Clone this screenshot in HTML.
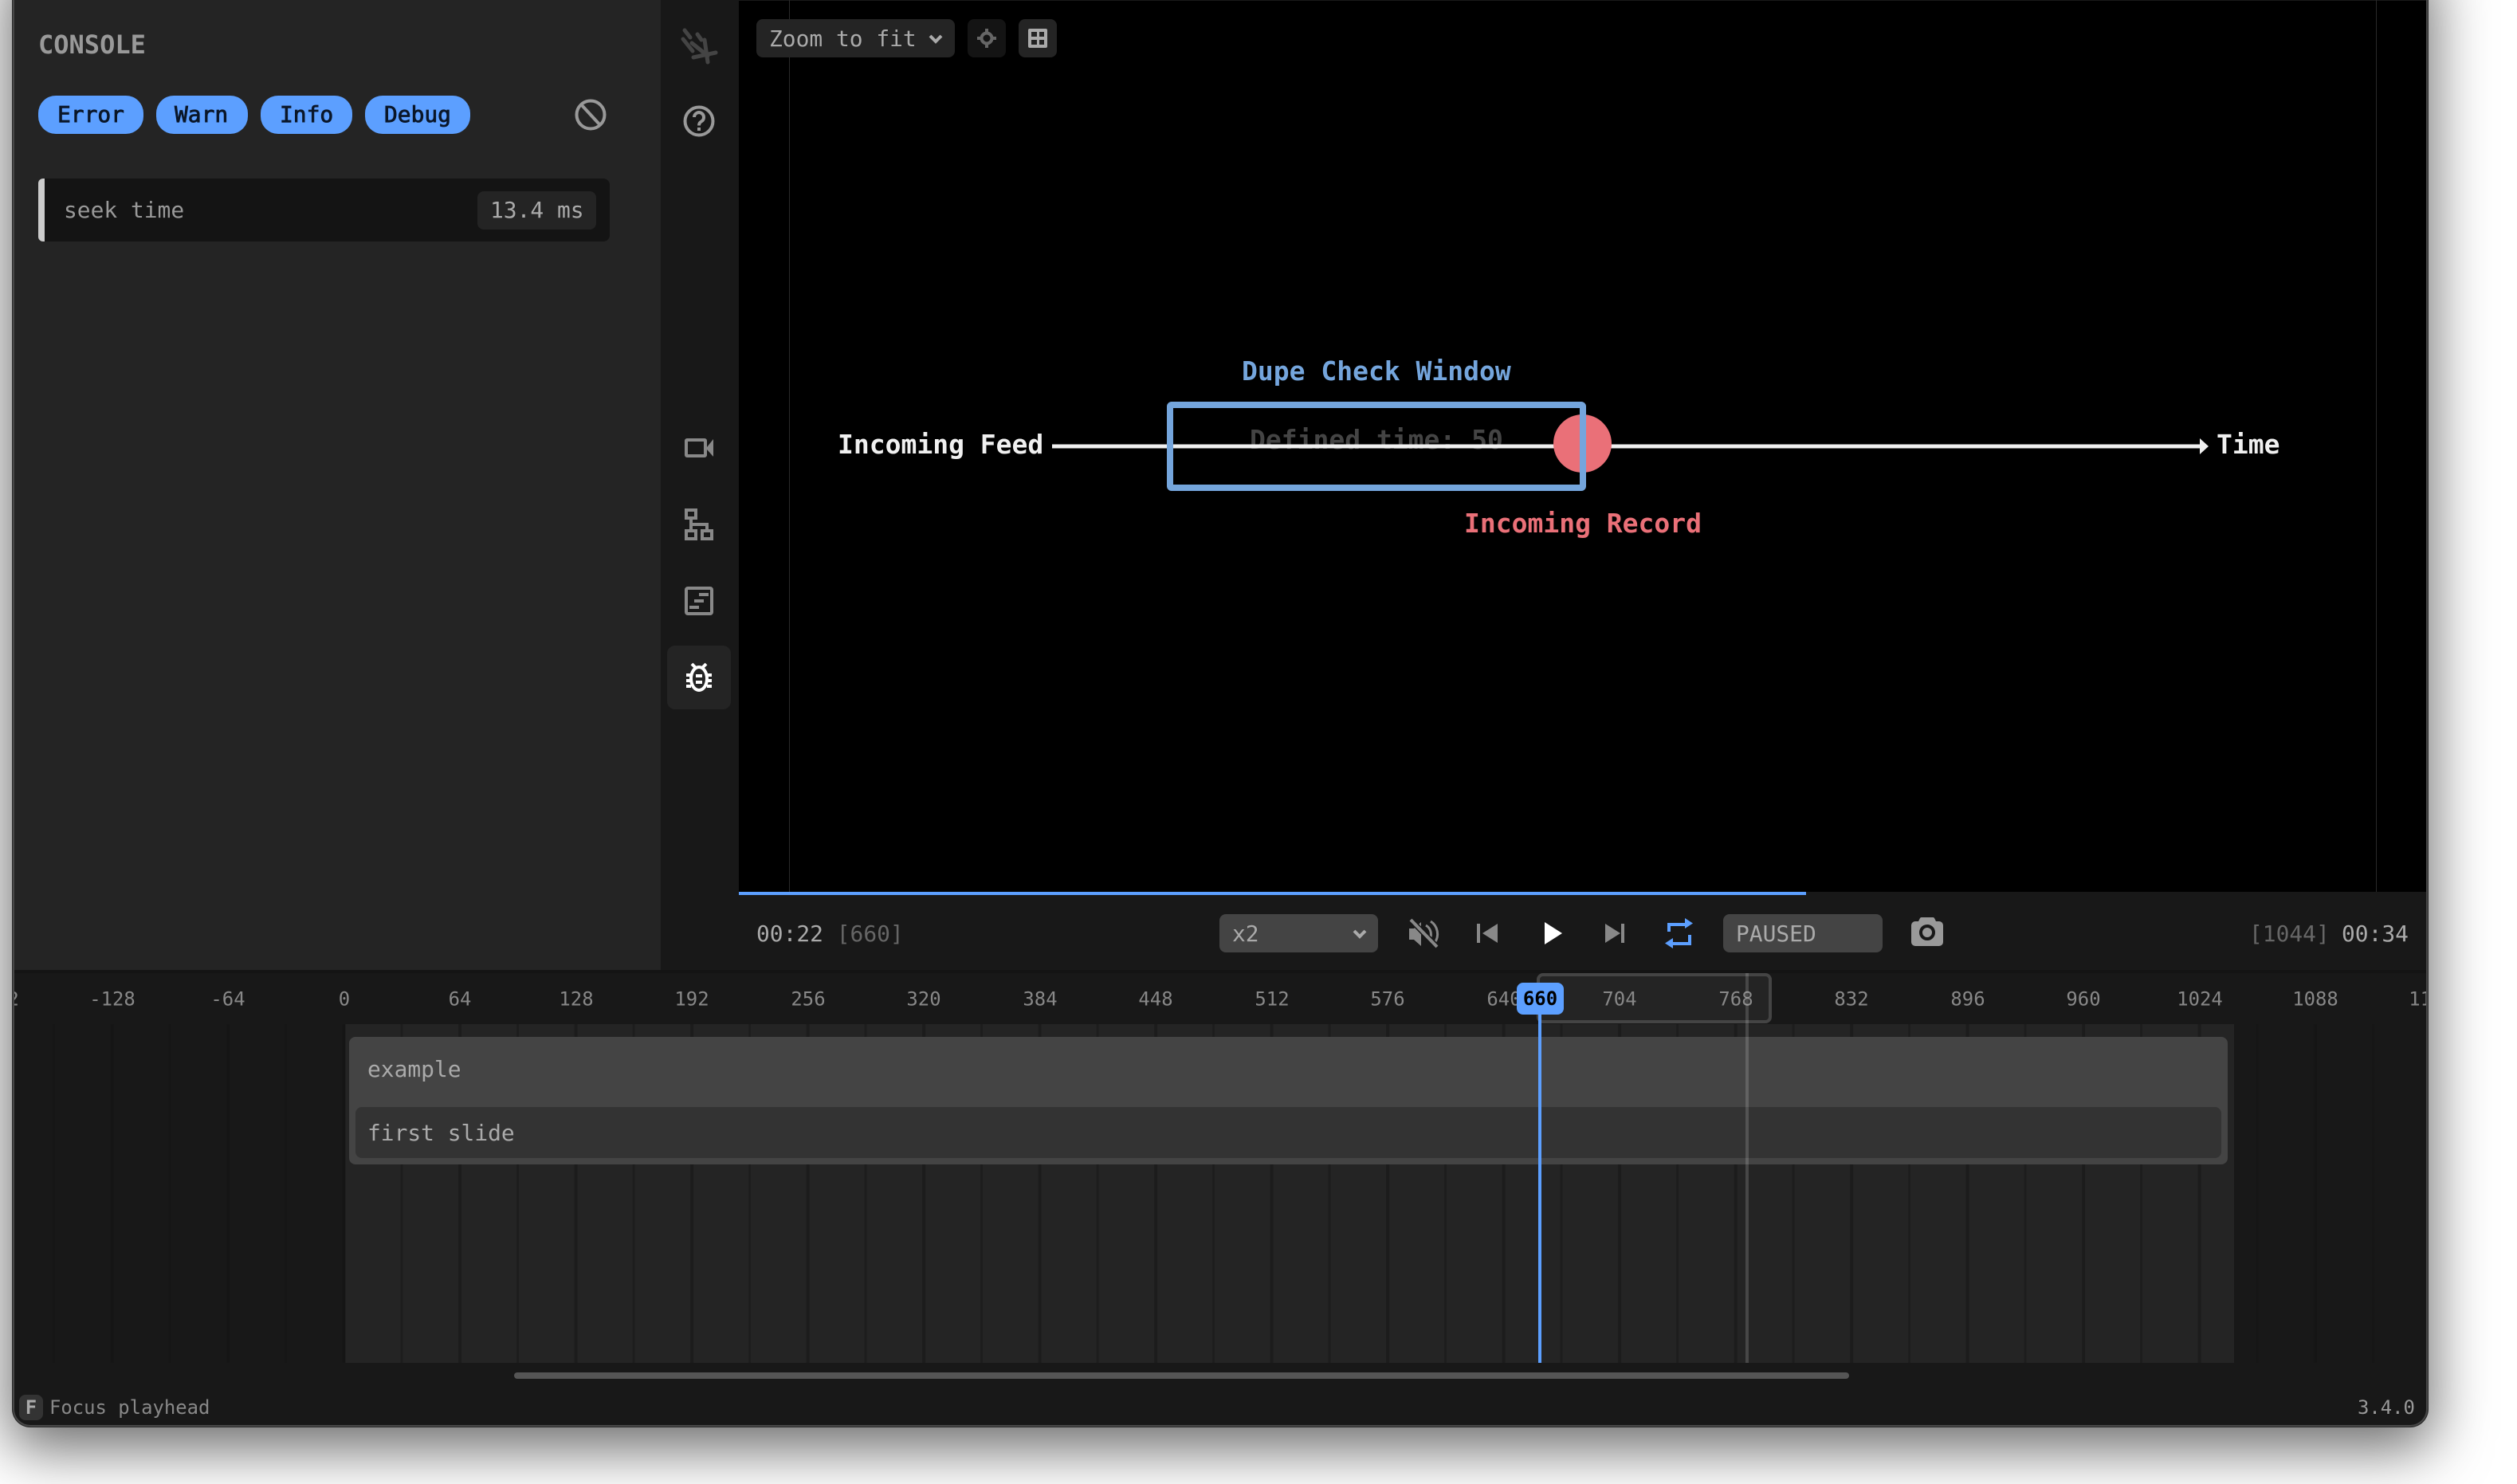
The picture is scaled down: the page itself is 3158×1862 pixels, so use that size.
<!DOCTYPE html>
<html>
<head>
<meta charset="utf-8">
<style>
html,body{margin:0;padding:0;background:#fff;width:3158px;height:1862px;overflow:hidden}
#win{position:absolute;left:16px;top:-60px;width:3030px;height:1850px;border-radius:22px;overflow:hidden;background:#181818;box-shadow:0 0 0 1px #2a2a2a,0 22px 72px 6px rgba(0,0,0,.58)}
#win svg{position:absolute;left:-16px;top:60px;display:block}
text{font-family:"DejaVu Sans Mono","Liberation Mono",monospace;white-space:pre}
.t28{font-size:27.9px}.t24{font-size:23.9px}.t33{font-size:33px;font-weight:bold}
.r text{font-size:23.9px;fill:#888;text-anchor:middle}
</style>
</head>
<body>
<div id="win">
<svg width="3158" height="1862" viewBox="0 0 3158 1862" xmlns="http://www.w3.org/2000/svg">
<defs>
<pattern id="gi" patternUnits="userSpaceOnUse" x="429.6" y="0" width="145.5" height="10"><rect x="0" y="0" width="4" height="10" fill="#1c1c1c"/><rect x="73" y="0" width="3" height="10" fill="#1d1d1d"/></pattern>
<pattern id="go" patternUnits="userSpaceOnUse" x="429.6" y="0" width="145.5" height="10"><rect x="0" y="0" width="4" height="10" fill="#151515"/><rect x="73" y="0" width="3" height="10" fill="#161616"/></pattern>
</defs>

<!-- panels -->
<rect x="0" y="0" width="829" height="1217" fill="#242424"/>
<rect x="829" y="0" width="98" height="1217" fill="#181818"/>
<rect x="927" y="0" width="2131" height="1119" fill="#000"/>
<rect x="927" y="0" width="2131" height="1" fill="#1a1a1a"/>
<rect x="990" y="0" width="1" height="1119" fill="#2a2a2a"/>
<rect x="2981" y="0" width="1" height="1119" fill="#2a2a2a"/>

<!-- console -->
<text x="48" y="67" font-size="32" font-weight="bold" fill="#999">CONSOLE</text>
<rect x="48" y="120" width="132" height="48" rx="22" fill="#5c9fff"/>
<rect x="196" y="120" width="115" height="48" rx="22" fill="#5c9fff"/>
<rect x="327" y="120" width="115" height="48" rx="22" fill="#5c9fff"/>
<rect x="458" y="120" width="132" height="48" rx="22" fill="#5c9fff"/>
<g class="t28" fill="#0a1628" stroke="#0a1628" stroke-width=".8">
<text x="72" y="153">Error</text><text x="219" y="153">Warn</text><text x="351" y="153">Info</text><text x="482" y="153">Debug</text>
</g>
<g fill="none" stroke="#999" stroke-width="4"><circle cx="741" cy="144" r="17.5"/><path d="M729 131L753 157"/></g>

<rect x="48" y="224" width="717" height="79" rx="8" fill="#141414"/>
<path d="M56 224H54a6 6 0 0 0-6 6v67a6 6 0 0 0 6 6h2z" fill="#ccc"/>
<rect x="599" y="240" width="149" height="48" rx="8" fill="#242424"/>
<text class="t28" x="80" y="273" fill="#999">seek time</text>
<text class="t28" x="615" y="273" fill="#aaa">13.4 ms</text>

<!-- rail icons -->
<g fill="none" stroke="#444" stroke-width="5" stroke-linecap="round">
<path d="M859 38L866 47M875 43L880 50M857 49L869 64M868 54L888 70M884 50L888 78M870 72L898 66"/>
</g>
<g fill="none" stroke="#999" stroke-width="4"><circle cx="877" cy="152" r="17.500"/><path d="M871 147a6 6 0 1 1 9.500 5c-2.200 1.400-3.500 2.600-3.500 5.500"/></g>
<rect x="875" y="160" width="4" height="4" fill="#999"/>

<g fill="none" stroke="#888" stroke-width="4">
<rect x="861" y="552" width="24" height="20" rx="1"/>
<rect x="861" y="640" width="12" height="10"/><rect x="861" y="666" width="12" height="10"/><rect x="881" y="666" width="12" height="10"/>
<path d="M867 650V666M867 658H887V666"/>
<rect x="861" y="738" width="32" height="32" rx="2"/>
</g>
<path d="M887 561L895 551V573L887 564Z" fill="#888"/>
<rect x="877" y="744" width="12" height="4" fill="#888"/><rect x="871" y="752" width="12" height="4" fill="#888"/><rect x="865" y="760" width="12" height="4" fill="#888"/>

<rect x="837" y="810" width="80" height="80" rx="10" fill="#242424"/>
<g fill="none" stroke="#fff" stroke-width="4">
<ellipse cx="877" cy="851.500" rx="10" ry="14.500"/>
<path d="M868 833L873 838M886 833L881 838"/>
<path d="M861 847H867M861 854H867M861 861H867M887 847H893M887 854H893M887 861H893"/>
</g>
<rect x="873" y="846" width="8" height="4" fill="#fff"/><rect x="873" y="854" width="8" height="4" fill="#fff"/>

<!-- viewport toolbar -->
<rect x="949" y="24" width="249" height="48" rx="8" fill="#242424"/>
<text class="t28" x="965" y="58" fill="#aaa">Zoom to fit</text>
<path d="M1167 45L1174 52L1181 45" fill="none" stroke="#aaa" stroke-width="4"/>
<rect x="1214" y="24" width="48" height="48" rx="8" fill="#141414"/>
<g fill="none" stroke="#666" stroke-width="4"><circle cx="1238" cy="48" r="6.500"/><path d="M1238 36V42M1238 54V60M1226 48H1232M1244 48H1250"/></g>
<rect x="1278" y="24" width="48" height="48" rx="8" fill="#242424"/>
<rect x="1290" y="36" width="24" height="24" rx="2" fill="#aaa"/>
<g fill="#242424"><rect x="1294" y="40" width="7" height="6"/><rect x="1304" y="40" width="6" height="6"/><rect x="1294" y="50" width="7" height="6"/><rect x="1304" y="50" width="6" height="6"/></g>

<!-- diagram -->
<text class="t33" x="1568" y="563" fill="#444">Defined time: 50</text>
<rect x="1320" y="557.500" width="1442" height="5" fill="#f0f0f0"/>
<path d="M2760 550L2771 560L2760 570Z" fill="#f0f0f0"/>
<circle cx="1985.500" cy="556.500" r="36.500" fill="#ea7078"/>
<rect x="1468" y="508" width="518" height="104" rx="2" fill="none" stroke="#74a5dc" stroke-width="8"/>
<text class="t33" x="1558" y="477" fill="#74a5dc">Dupe Check Window</text>
<text class="t33" x="1051" y="569" fill="#f0f0f0">Incoming Feed</text>
<text class="t33" x="2781" y="569" fill="#f0f0f0">Time</text>
<text class="t33" x="1837" y="668" fill="#ea7078">Incoming Record</text>

<!-- controls -->
<rect x="927" y="1119" width="2131" height="98" fill="#181818"/>
<rect x="927" y="1119" width="1339" height="4" fill="#5c9fff"/>
<text class="t28" x="949" y="1181" fill="#aaa">00:22 <tspan fill="#666">[660]</tspan></text>
<rect x="1530" y="1147" width="199" height="48" rx="8" fill="#444"/>
<text class="t28" x="1546" y="1181" fill="#aaa">x2</text>
<path d="M1699 1168L1706 1175L1713 1168" fill="none" stroke="#aaa" stroke-width="4"/>

<path d="M1768 1165h6l9-8v30l-9-8h-6z" fill="#888"/>
<path d="M1789 1161a13 13 0 0 1 3 20M1795 1156a19 19 0 0 1 5 27" fill="none" stroke="#888" stroke-width="3"/>
<path d="M1770 1154L1803 1188" stroke="#181818" stroke-width="7"/>
<path d="M1770 1154L1803 1188" stroke="#888" stroke-width="4"/>

<rect x="1853" y="1159" width="4" height="24" fill="#888"/>
<path d="M1879 1159V1183L1860 1171Z" fill="#888"/>
<path d="M1938 1157L1960 1171L1938 1185Z" fill="#fff"/>
<path d="M2014 1159V1183L2033 1171Z" fill="#888"/>
<rect x="2034" y="1159" width="4" height="24" fill="#888"/>

<g fill="none" stroke="#5c9fff" stroke-width="4"><path d="M2094 1169V1160H2116"/><path d="M2120 1173V1184H2097"/></g>
<path d="M2114 1152L2124 1158.500L2114 1165Z M2099 1177L2089 1183.500L2099 1190Z" fill="#5c9fff"/>

<rect x="2162" y="1147" width="200" height="48" rx="8" fill="#444"/>
<text class="t28" x="2178" y="1181" fill="#aaa">PAUSED</text>

<path d="M2403 1156h4l2-4a2 2 0 0 1 2-1h14a2 2 0 0 1 2 1l2 4h4a5 5 0 0 1 5 5v21a5 5 0 0 1-5 5h-30a5 5 0 0 1-5-5v-21a5 5 0 0 1 5-5z" fill="#999"/>
<circle cx="2418" cy="1170" r="8" fill="#999" stroke="#181818" stroke-width="4"/>

<text class="t28" x="2822" y="1181" fill="#666">[1044]</text>
<text class="t28" x="2938" y="1181" fill="#aaa">00:34</text>

<!-- timeline -->
<rect x="0" y="1217" width="3158" height="4" fill="#141414"/>
<rect x="0" y="1221" width="3158" height="64" fill="#181818"/>
<rect x="0" y="1285" width="433" height="425" fill="url(#go)"/>
<rect x="2803" y="1285" width="300" height="425" fill="url(#go)"/>
<rect x="433" y="1285" width="2370" height="425" fill="#242424"/>
<rect x="433" y="1285" width="2370" height="425" fill="url(#gi)"/>

<rect x="1930" y="1223" width="291" height="59" rx="6" fill="#242424" stroke="#444" stroke-width="4"/>

<g class="r">
<text x="-5" y="1261.500">-192</text><text x="141" y="1261.500">-128</text><text x="286" y="1261.500">-64</text><text x="432" y="1261.500">0</text>
<text x="577" y="1261.500">64</text><text x="723" y="1261.500">128</text><text x="868" y="1261.500">192</text><text x="1014" y="1261.500">256</text>
<text x="1159" y="1261.500">320</text><text x="1305" y="1261.500">384</text><text x="1450" y="1261.500">448</text><text x="1596" y="1261.500">512</text>
<text x="1741" y="1261.500">576</text><text x="1887" y="1261.500">640</text><text x="2032" y="1261.500">704</text><text x="2178" y="1261.500">768</text>
<text x="2323" y="1261.500">832</text><text x="2469" y="1261.500">896</text><text x="2614" y="1261.500">960</text><text x="2760" y="1261.500">1024</text>
<text x="2905" y="1261.500">1088</text><text x="3051" y="1261.500">1152</text>
</g>

<rect x="438" y="1301" width="2357" height="160" rx="8" fill="#444"/>
<rect x="446" y="1389" width="2341" height="64" rx="8" fill="#333"/>
<text class="t28" x="461" y="1351" fill="#aaa">example</text>
<text class="t28" x="461" y="1431" fill="#aaa">first slide</text>

<rect x="2190" y="1221" width="4" height="489" fill="#fff" fill-opacity=".16"/>
<rect x="1930" y="1273" width="4" height="437" fill="#5c9fff"/>
<rect x="1903" y="1233" width="59" height="40" rx="8" fill="#5c9fff"/>
<text x="1932.500" y="1261" font-size="23.9" font-weight="bold" text-anchor="middle" fill="#000">660</text>

<rect x="645" y="1722" width="1675" height="8" rx="4" fill="#555"/>

<rect x="24" y="1750" width="30" height="32" rx="8" fill="#333"/>
<text x="39" y="1774" font-size="23.9" font-weight="bold" text-anchor="middle" fill="#aaa">F</text>
<text class="t24" x="62" y="1774" fill="#888">Focus playhead</text>
<text class="t24" x="2958" y="1774" fill="#999">3.4.0</text>

<rect x="17" y="-60" width="3028" height="1849" rx="21" fill="none" stroke="#484848" stroke-width="2"/>
</svg>
</div>
</body>
</html>
